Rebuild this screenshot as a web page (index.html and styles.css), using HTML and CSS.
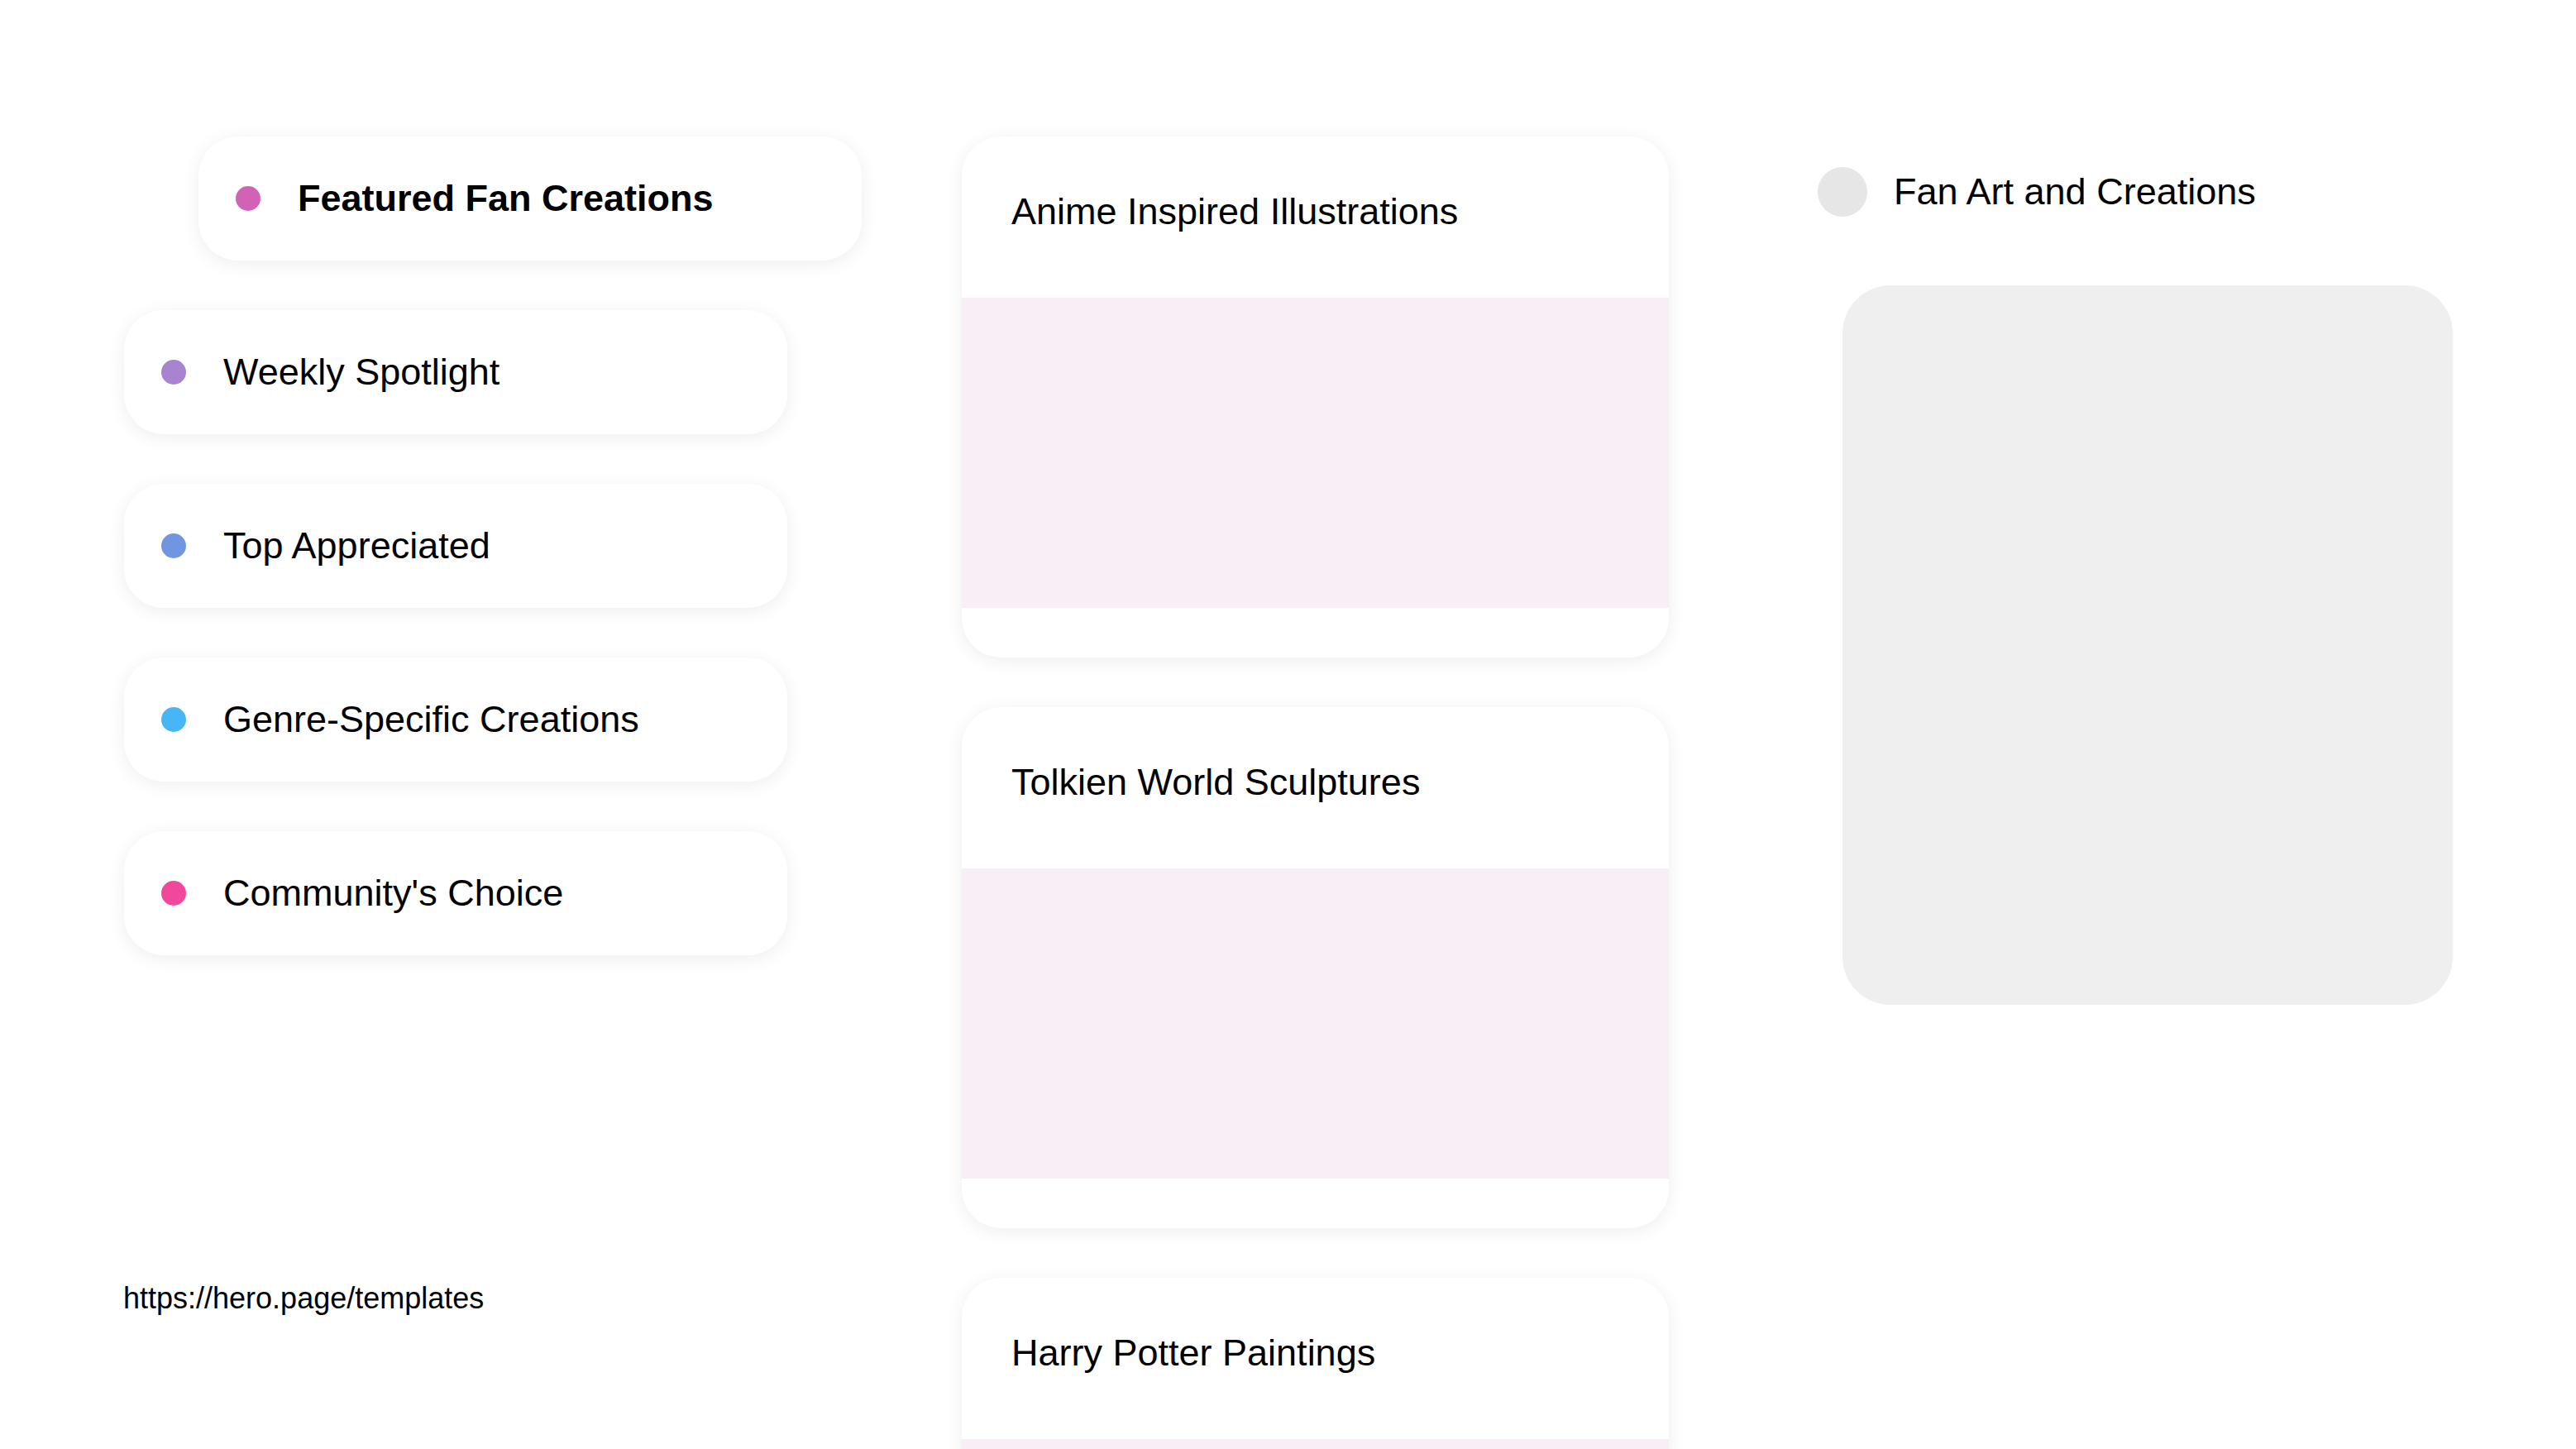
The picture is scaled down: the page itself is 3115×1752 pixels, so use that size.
FILE: index.html
```html
<!DOCTYPE html>
<html>
<head>
    <link rel="stylesheet" href="styles.css">
</head>
<body>
    <div class="page">
        <div class="nav">
            <div class="nav-item active">
                <span class="dot dot-pink"></span>
                <span class="nav-label">Featured Fan Creations</span>
            </div>
            <div class="nav-item">
                <span class="dot dot-purple"></span>
                <span class="nav-label">Weekly Spotlight</span>
            </div>
            <div class="nav-item">
                <span class="dot dot-blue"></span>
                <span class="nav-label">Top Appreciated</span>
            </div>
            <div class="nav-item">
                <span class="dot dot-sky"></span>
                <span class="nav-label">Genre-Specific Creations</span>
            </div>
            <div class="nav-item">
                <span class="dot dot-rose"></span>
                <span class="nav-label">Community's Choice</span>
            </div>

            <div class="url">https://hero.page/templates</div>
        </div>

        <div class="feed">
            <div class="card">
                <div class="card-title">Anime Inspired Illustrations</div>
                <div class="card-image"></div>
            </div>
            <div class="card">
                <div class="card-title">Tolkien World Sculptures</div>
                <div class="card-image"></div>
            </div>
            <div class="card">
                <div class="card-title">Harry Potter Paintings</div>
                <div class="card-image"></div>
            </div>
        </div>

        <div class="side">
            <div class="side-header">
                <span class="avatar"></span>
                <span class="side-title">Fan Art and Creations</span>
            </div>
            <div class="preview"></div>
        </div>
    </div>
</body>
</html>
```

FILE: styles.css
```css
html, body {
    overflow: hidden;
}

body {
    font-family: 'Liberation Sans', Arial, sans-serif;
    margin: 0;
    background: #fff;
    color: #000;
}

.page {
    display: flex;
    align-items: flex-start;
    padding: 165px 0 0 150px;
}

/* left menu */
.nav {
    width: 802px;
    margin-right: 211px;
    display: flex;
    flex-direction: column;
    gap: 60px;
}

.nav-item {
    height: 150px;
    display: flex;
    align-items: center;
    gap: 45px;
    padding-left: 45px;
    box-sizing: border-box;
    background: #fff;
    border-radius: 48px;
    box-shadow: 0 4px 22px rgba(0, 0, 0, 0.07);
    font-size: 45px;
}

.nav-item.active {
    transform: translateX(90px);
    font-weight: bold;
}

.dot {
    width: 30px;
    height: 30px;
    border-radius: 50%;
    flex-shrink: 0;
}

.dot-pink { background: #d262b5; }
.dot-purple { background: #a783d0; }
.dot-blue { background: #7096e2; }
.dot-sky { background: #48b6f6; }
.dot-rose { background: #f2489b; }

.url {
    margin-top: 334px;
    margin-left: -1px;
    font-size: 36px;
}

/* middle feed */
.feed {
    width: 855px;
    margin-right: 180px;
    display: flex;
    flex-direction: column;
    gap: 60px;
}

.card {
    background: #fff;
    border-radius: 48px;
    box-shadow: 0 4px 22px rgba(0, 0, 0, 0.07);
    overflow: hidden;
    padding-bottom: 60px;
}

.card-title {
    padding: 65px 60px 78px;
    font-size: 45px;
}

.card-image {
    height: 375px;
    background: #f8eef6;
}

/* right panel */
.side {
    margin-top: 37px;
    width: 768px;
}

.side-header {
    display: flex;
    align-items: center;
    gap: 32px;
    font-size: 45px;
}

.avatar {
    width: 60px;
    height: 60px;
    border-radius: 50%;
    background: #e6e6e6;
}

.preview {
    margin: 83px 0 0 30px;
    width: 738px;
    height: 870px;
    border-radius: 58px;
    background: #efefef;
}
```
